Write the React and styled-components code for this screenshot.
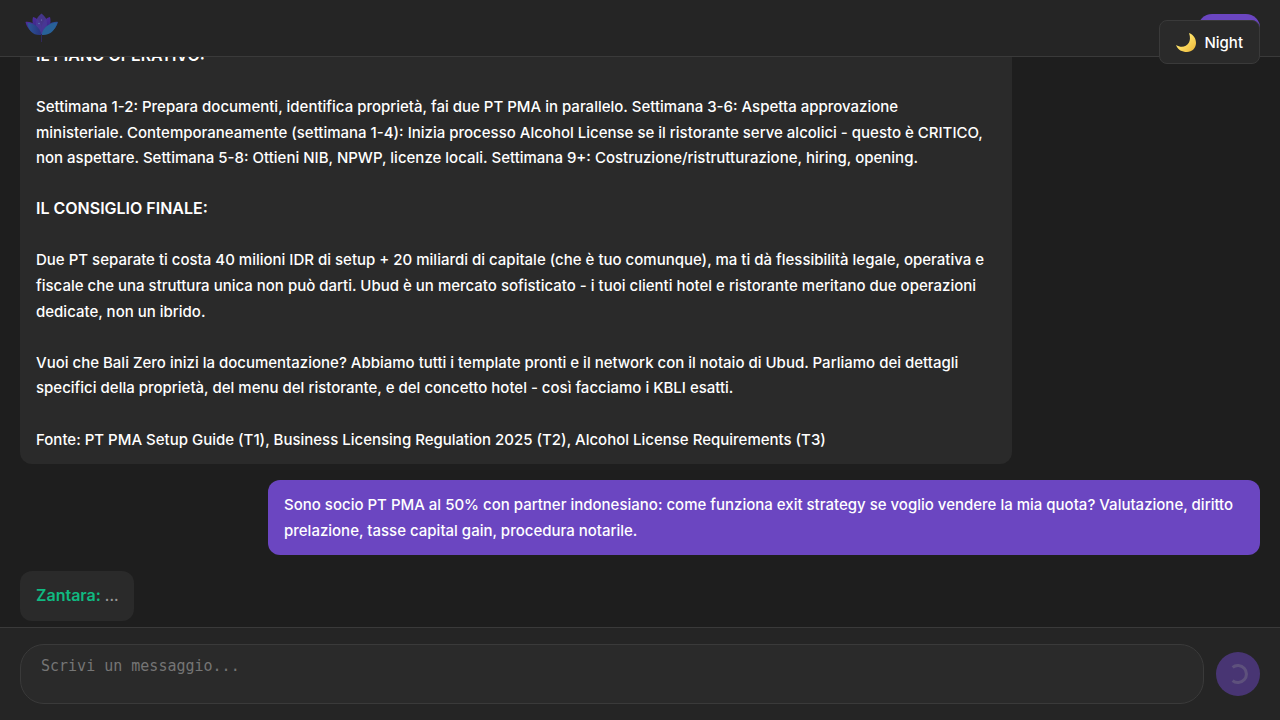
import React from "react";
import styled, { createGlobalStyle } from "styled-components";

const GlobalStyle = createGlobalStyle`
  *, *::before, *::after { box-sizing: border-box; }
  html, body, #root { height: 100%; }
  body {
    margin: 0;
    background: #1e1e1e;
    color: #fff;
    font-family: Inter, "Liberation Sans", sans-serif;
    font-size: 15px;
    font-weight: 500;
    line-height: 1.6rem;
    overflow: hidden;
  }
`;

const Page = styled.div`
  display: flex;
  flex-direction: column;
  height: 100vh;
`;

const Header = styled.header`
  display: flex;
  align-items: center;
  justify-content: space-between;
  flex: none;
  padding: 8px 20px;
  background: #252525;
  border-bottom: 1px solid #3a3a3a;
`;

const Logo = styled.svg`
  display: block;
  width: 44px;
  height: 40px;
`;

const AccountButton = styled.button`
  width: 62px;
  height: 28px;
  border: 0;
  border-radius: 14px;
  background: #6b46c1;
`;

const ThemeToggle = styled.button`
  position: fixed;
  top: 20px;
  right: 20px;
  z-index: 10;
  display: flex;
  align-items: center;
  gap: 8px;
  height: 44px;
  padding: 0 16px;
  border: 1px solid #3a3a3a;
  border-radius: 8px;
  background: #2a2a2a;
  color: #fff;
  font: 500 15px Inter, "Liberation Sans", sans-serif;
`;

const Moon = styled.svg`
  width: 20px;
  height: 20px;
`;

const Chat = styled.main`
  display: flex;
  flex: 1;
  flex-direction: column;
  justify-content: flex-end;
  gap: 16px;
  min-height: 0;
  padding: 0 20px 6px;
  overflow: hidden;
`;

const Bubble = styled.article`
  flex: none;
  align-self: ${(p) => (p.$own ? "flex-end" : "flex-start")};
  max-width: 80%;
  padding: 12px 16px;
  border-radius: 12px;
  background: ${(p) => (p.$own ? "#6b46c1" : "#2a2a2a")};
  white-space: pre-wrap;
`;

const Heading = styled.strong`
  font-size: 16px;
  font-weight: 600;
`;

const Sender = styled(Heading)`
  color: #10b981;
`;

const Typing = styled.span`
  color: #999;
`;

const Composer = styled.form`
  display: flex;
  align-items: center;
  flex: none;
  gap: 12px;
  padding: 16px 20px;
  background: #252525;
  border-top: 1px solid #3a3a3a;
`;

const MessageInput = styled.textarea`
  flex: 1;
  height: 60px;
  padding: 12px 20px;
  border: 1px solid #3a3a3a;
  border-radius: 24px;
  background: #2a2a2a;
  color: #fff;
  font: 15px "DejaVu Sans Mono", monospace;
  resize: none;

  &::placeholder { color: #757575; }
`;

const SendButton = styled.button`
  display: grid;
  place-items: center;
  width: 44px;
  height: 44px;
  padding: 0;
  border: 0;
  border-radius: 50%;
  background: #6b46c1;
  opacity: 0.5;
`;

const Spinner = styled.svg`
  width: 20px;
  height: 20px;
`;

const PLAN =
  "Settimana 1-2: Prepara documenti, identifica proprietà, fai due PT PMA in parallelo. Settimana 3-6: Aspetta approvazione\nministeriale. Contemporaneamente (settimana 1-4): Inizia processo Alcohol License se il ristorante serve alcolici - questo è CRITICO, non aspettare. Settimana 5-8: Ottieni NIB, NPWP, licenze locali. Settimana 9+: Costruzione/ristrutturazione, hiring, opening.";
const ADVICE =
  "Due PT separate ti costa 40 milioni IDR di setup + 20 miliardi di capitale (che è tuo comunque), ma ti dà flessibilità legale, operativa e fiscale che una struttura unica non può darti. Ubud è un mercato sofisticato - i tuoi clienti hotel e ristorante meritano due operazioni dedicate, non un ibrido.";
const OFFER =
  "Vuoi che Bali Zero inizi la documentazione? Abbiamo tutti i template pronti e il network con il notaio di Ubud. Parliamo dei dettagli specifici della proprietà, del menu del ristorante, e del concetto hotel - così facciamo i KBLI esatti.";
const SOURCE =
  "Fonte: PT PMA Setup Guide (T1), Business Licensing Regulation 2025 (T2), Alcohol License Requirements (T3)";
const QUESTION =
  "Sono socio PT PMA al 50% con partner indonesiano: come funziona exit strategy se voglio vendere la mia quota? Valutazione, diritto prelazione, tasse capital gain, procedura notarile.";

export default function App() {
  return (
    <Page>
      <GlobalStyle />
      <Header>
        <Logo viewBox="0 0 44 40" role="img" aria-label="Zantara">
          <defs>
            <linearGradient id="petal" x1="0" y1="0" x2="0" y2="1">
              <stop offset="0" stopColor="#4d2c9c" />
              <stop offset="1" stopColor="#33277c" />
            </linearGradient>
            <linearGradient id="blue" x1="0" y1="0" x2="1" y2="0">
              <stop offset="0" stopColor="#2b5796" />
              <stop offset="1" stopColor="#29337f" />
            </linearGradient>
          </defs>
          <path d="M21.5 26 C12 26 7 21 5.5 14 C11 13 18 17 21.5 26Z" fill="url(#petal)" />
          <path d="M21.5 26 C31 26 36 21 38 14 C32 13 25 17 21.5 26Z" fill="#2d4793" />
          <path d="M21.5 26 C13 22 11.5 15 13 9 C19 10 23 18 21.5 26Z" fill="url(#petal)" />
          <path d="M21.5 26 C30 22 31.5 15 30 9 C24 10 20 18 21.5 26Z" fill="url(#petal)" />
          <path d="M21.5 27 C14 19 14 11 21.5 5.5 C29 11 29 19 21.5 27Z" fill="#493795" fillOpacity="0.9" />
          <path d="M21.5 27 C13 28 8 22 7.5 15 C14 15 20 19 21.5 27Z" fill="url(#blue)" />
          <path d="M21.5 27 C30 28 35 22 37.5 14.5 C29 15 23 19 21.5 27Z" fill="#286198" />
          <circle cx="21.5" cy="12" r="0.6" fill="#7c82bd" />
          <circle cx="19" cy="15.5" r="0.7" fill="#5c86b8" />
          <path d="M21.5 26V34" stroke="#30285c" />
        </Logo>
        <AccountButton type="button" aria-label="Account" />
      </Header>
      <ThemeToggle type="button">
        <Moon viewBox="0 0 20 20" aria-hidden="true">
          <defs>
            <linearGradient id="moon" x1="0" y1="0" x2="1" y2="1">
              <stop offset="0.4" stopColor="#ffe36a" />
              <stop offset="1" stopColor="#e9b335" />
            </linearGradient>
          </defs>
          <path d="M13 1 C18 3 20 7 20 11 C20 16 16 20 11 20 C6 20 2 18 0 13 C8 18 17 12 13 1Z" fill="url(#moon)" />
        </Moon>
        Night
      </ThemeToggle>
      <Chat>
        <Bubble>
          <Heading>IL PIANO OPERATIVO:</Heading>
          {"\n\n" + PLAN + "\n\n"}
          <Heading>IL CONSIGLIO FINALE:</Heading>
          {"\n\n" + ADVICE + "\n\n" + OFFER + "\n\n" + SOURCE}
        </Bubble>
        <Bubble $own>{QUESTION}</Bubble>
        <Bubble>
          <Sender>Zantara:</Sender> <Typing>...</Typing>
        </Bubble>
      </Chat>
      <Composer>
        <MessageInput aria-label="Messaggio" placeholder="Scrivi un messaggio..." />
        <SendButton type="button" disabled aria-label="Invia">
          <Spinner viewBox="0 0 20 20" aria-hidden="true">
            <path d="M4.6 3.4 A8.5 8.5 0 1 1 4.6 16.6" fill="none" stroke="#fff" strokeOpacity="0.3" strokeWidth="3" />
          </Spinner>
        </SendButton>
      </Composer>
    </Page>
  );
}
